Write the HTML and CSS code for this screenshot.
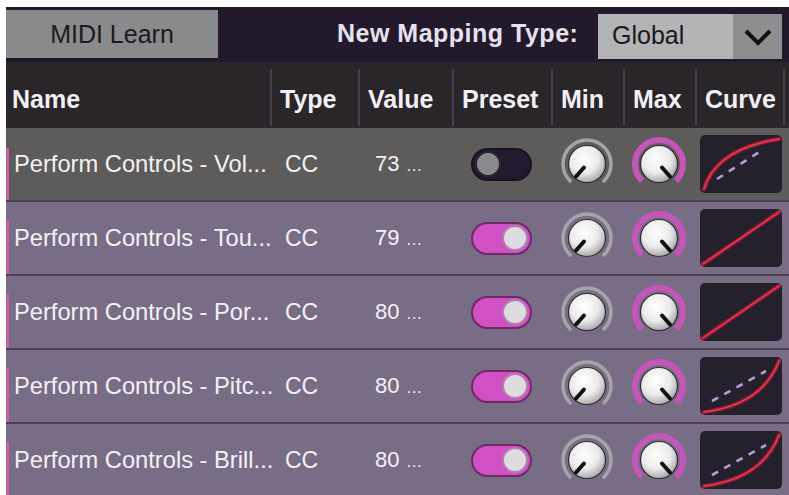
FILE: index.html
```html
<!DOCTYPE html>
<html lang="en">
<head>
<meta charset="utf-8">
<title>MIDI Mapping</title>
<link rel="stylesheet" href="styles.css">
</head>
<body>
<div class="panel">
  <div class="topbar">
    <div class="learn-btn">MIDI Learn</div>
    <div class="mapping-label">New Mapping Type:</div>
    <div class="dropdown">
      <span class="dropdown-value">Global</span>
      <span class="dropdown-arrow">
        <svg width="30" height="18" viewBox="0 0 30 18"><path d="M3 3 L15 15 L27 3" fill="none" stroke="#111" stroke-width="4" stroke-linejoin="miter"/></svg>
      </span>
    </div>
  </div>

  <div class="grid header">
    <div class="hcell first">Name</div>
    <div class="hcell">Type</div>
    <div class="hcell">Value</div>
    <div class="hcell">Preset</div>
    <div class="hcell">Min</div>
    <div class="hcell">Max</div>
    <div class="hcell">Curve</div>
    <div class="hcell tail"></div>
  </div>

  <div class="rows" id="rows"></div>
</div>

<template id="knob-min">
  <svg class="knob" width="56" height="56" viewBox="0 0 56 56">
    <path d="M11.03 44.97 A24 24 0 1 1 44.97 44.97" fill="none" stroke="#a6a4a8" stroke-width="3.5" stroke-linecap="round"/>
    <circle cx="28" cy="28" r="18.5" fill="url(#knobFace)" stroke="#2e2a30" stroke-width="1.2"/>
    <line x1="25" y1="31.5" x2="17" y2="40.5" stroke="#111" stroke-width="4" stroke-linecap="round"/>
  </svg>
</template>

<template id="knob-max">
  <svg class="knob" width="56" height="56" viewBox="0 0 56 56">
    <path d="M11.03 44.97 A24 24 0 1 1 44.97 44.97" fill="none" stroke="#c556b9" stroke-width="6"/>
    <circle cx="28" cy="28" r="18.5" fill="url(#knobFace)" stroke="#2e2a30" stroke-width="1.2"/>
    <line x1="31" y1="31.5" x2="39" y2="40.5" stroke="#111" stroke-width="4" stroke-linecap="round"/>
  </svg>
</template>

<svg width="0" height="0" class="defs">
  <defs>
    <radialGradient id="knobFace" cx="0.42" cy="0.36" r="0.7">
      <stop offset="0" stop-color="#ffffff"/>
      <stop offset="0.55" stop-color="#ecebec"/>
      <stop offset="1" stop-color="#9d9a9e"/>
    </radialGradient>
  </defs>
</svg>

<script src="app.js"></script>
</body>
</html>
```

FILE: app.js
```js
// Mapping rows: name, type, value, preset on/off, curve shape
const mappings = [
  { name: "Perform Controls - Vol...", type: "CC", value: "73", preset: false, curve: "log", selected: true },
  { name: "Perform Controls - Tou...", type: "CC", value: "79", preset: true, curve: "lin" },
  { name: "Perform Controls - Por...", type: "CC", value: "80", preset: true, curve: "lin" },
  { name: "Perform Controls - Pitc...", type: "CC", value: "80", preset: true, curve: "exp" },
  { name: "Perform Controls - Brill...", type: "CC", value: "80", preset: true, curve: "exp" }
];

const curvePaths = {
  log: { red: "M4 54 Q16 14 79 4", dash: "M17 44 L64 14" },
  lin: { red: "M3 55 L79 3", dash: null },
  exp: { red: "M4 55 Q62 48 79 4", dash: "M12 44 L66 14" }
};

function curveSvg(kind) {
  const c = curvePaths[kind];
  const dash = c.dash
    ? `<path d="${c.dash}" fill="none" stroke="#b89ad6" stroke-width="2.6" stroke-dasharray="7 7"/>`
    : "";
  return `<svg width="82" height="58" viewBox="0 0 82 58">
    <rect x="0" y="0" width="82" height="58" rx="5" fill="#25212c"/>
    ${dash}
    <path d="${c.red}" fill="none" stroke="#a3182f" stroke-width="4.2" stroke-linecap="round"/>
    <path d="${c.red}" fill="none" stroke="#e0405e" stroke-width="1.4" stroke-linecap="round"/>
  </svg>`;
}

const rowsEl = document.getElementById("rows");
const knobMin = document.getElementById("knob-min").innerHTML;
const knobMax = document.getElementById("knob-max").innerHTML;

mappings.forEach(m => {
  const row = document.createElement("div");
  row.className = "grid row" + (m.selected ? " selected" : "");
  row.innerHTML = `
    <div class="cell name">${m.name}</div>
    <div class="cell type">${m.type}</div>
    <div class="cell value">${m.value}<span class="more">...</span></div>
    <div class="cell center"><span class="toggle ${m.preset ? "on" : "off"}"><span class="thumb"></span></span></div>
    <div class="cell center">${knobMin}</div>
    <div class="cell center">${knobMax}</div>
    <div class="cell curve">${curveSvg(m.curve)}</div>
    <div class="cell"></div>`;
  rowsEl.appendChild(row);
});
```

FILE: styles.css
```css
html, body {
  margin: 0;
  padding: 0;
  background: #ffffff;
}

body {
  font-family: "Liberation Sans", Arial, sans-serif;
  width: 789px;
  height: 495px;
  overflow: hidden;
}

.defs {
  position: absolute;
}

.panel {
  margin: 7px 0 0 6px;
  background: #221a2c;
  height: 488px;
  overflow: hidden;
}

/* top bar */
.topbar {
  display: flex;
  height: 55px;
  padding-right: 7px;
}

.learn-btn {
  margin-top: 3px;
  width: 212px;
  height: 48px;
  background: #8a898b;
  color: #1c1a1e;
  font-size: 25px;
  display: flex;
  align-items: center;
  justify-content: center;
}

.mapping-label {
  margin-left: 119px;
  height: 55px;
  display: flex;
  align-items: center;
  padding-bottom: 3px;
  box-sizing: border-box;
  color: #e6e2ec;
  font-size: 25px;
  font-weight: bold;
  letter-spacing: 0.5px;
}

.dropdown {
  margin-left: auto;
  margin-top: 7px;
  width: 184px;
  height: 45px;
  display: flex;
  background: #b4b3b5;
}

.dropdown-value {
  flex: 1;
  display: flex;
  align-items: center;
  padding-left: 14px;
  padding-bottom: 3px;
  color: #1a181c;
  font-size: 25px;
}

.dropdown-arrow {
  width: 49px;
  background: #8e8d8f;
  display: flex;
  align-items: center;
  justify-content: center;
}

/* shared column grid */
.grid {
  display: grid;
  grid-template-columns: 264px 88px 94px 99px 72px 72px 88px 1fr;
}

.header {
  background: #2a2529;
  height: 64px;
  padding-top: 7px;
  box-sizing: border-box;
}

.hcell {
  border-left: 2px solid #46404e;
  color: #f1eff3;
  font-weight: bold;
  font-size: 25px;
  padding-left: 8px;
  padding-top: 16px;
  box-sizing: border-box;
  white-space: nowrap;
}

.hcell.first {
  border-left: none;
  padding-left: 6px;
}

/* rows */
.row {
  height: 74px;
  border-top: 2px solid #4b4355;
  box-sizing: border-box;
  background:
    linear-gradient(#c7629f, #c7629f) 0 18px / 3px 100% no-repeat,
    #796d85;
}

.row.selected {
  border-top-color: #2a2529;
  background:
    linear-gradient(#c7629f, #c7629f) 0 20px / 3px 100% no-repeat,
    #5d5c5a;
}

.cell {
  display: flex;
  align-items: center;
  color: #f3f1f5;
  font-size: 23px;
  white-space: nowrap;
}

.cell.name {
  padding-left: 8px;
  font-size: 23.7px;
}

.cell.type {
  padding-left: 15px;
}

.cell.value {
  padding-left: 17px;
  font-size: 22px;
}

.more {
  margin-left: 7px;
  font-size: 17px;
  letter-spacing: 0.5px;
  padding-top: 4px;
}

.cell.center {
  justify-content: center;
}

.cell.curve {
  padding-left: 5px;
}

/* preset toggle */
.toggle {
  width: 61px;
  height: 33px;
  border-radius: 17px;
  box-sizing: border-box;
  display: flex;
  align-items: center;
  padding: 0 2px;
}

.toggle.off {
  background: #231a30;
  border: 2px solid #1a1322;
  justify-content: flex-start;
}

.toggle.on {
  background: #d150c3;
  border: 2px solid #6c2b67;
  justify-content: flex-end;
}

.thumb {
  width: 26px;
  height: 26px;
  border-radius: 50%;
  box-sizing: border-box;
}

.toggle.off .thumb {
  background: #8b8a8d;
  border: 2px solid #2a2530;
}

.toggle.on .thumb {
  background: #dedcdf;
  border: 2px solid #b47fb2;
}

.knob {
  display: block;
}
```
